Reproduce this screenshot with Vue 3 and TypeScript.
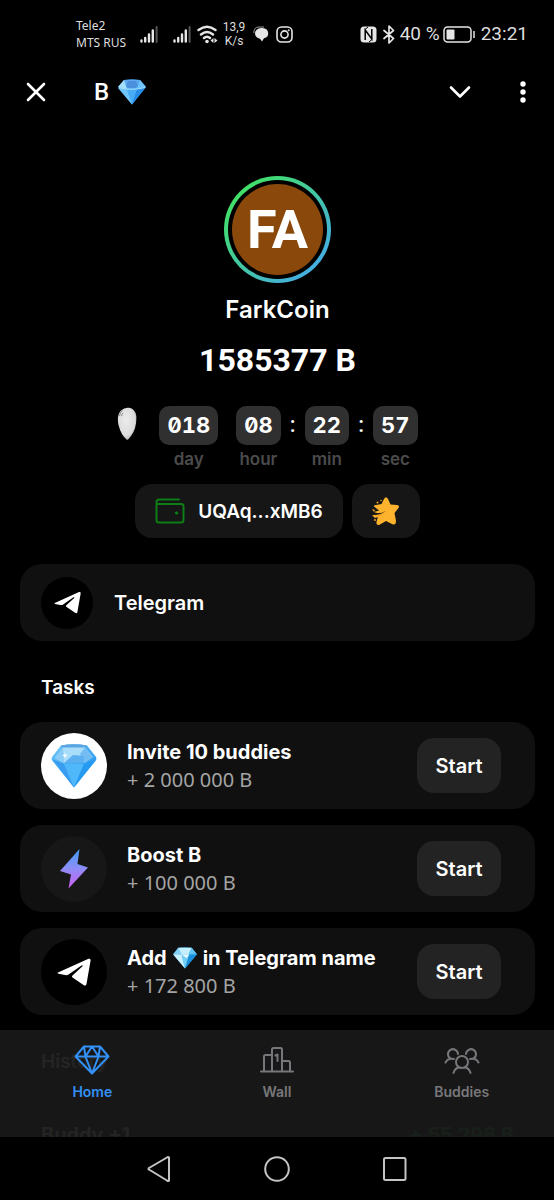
<script setup lang="ts">
import { ref } from 'vue'

interface TimeUnit { value: string; label: string; colon: boolean }
interface Task { id: string; icon: 'gem' | 'bolt' | 'telegram'; before: string; after: string; reward: string }
interface Tab { id: 'home' | 'wall' | 'buddies'; label: string }

const units: TimeUnit[] = [
  { value: '018', label: 'day', colon: false },
  { value: '08', label: 'hour', colon: false },
  { value: '22', label: 'min', colon: true },
  { value: '57', label: 'sec', colon: true },
]
const tasks: Task[] = [
  { id: 'invite', icon: 'gem', before: 'Invite 10 buddies', after: '', reward: '+ 2 000 000 B' },
  { id: 'boost', icon: 'bolt', before: 'Boost B', after: '', reward: '+ 100 000 B' },
  { id: 'name', icon: 'telegram', before: 'Add', after: 'in Telegram name', reward: '+ 172 800 B' },
]
const tabs: Tab[] = [
  { id: 'home', label: 'Home' },
  { id: 'wall', label: 'Wall' },
  { id: 'buddies', label: 'Buddies' },
]
const active = ref<Tab['id']>('home')
</script>

<template>
  <div class="screen">
    <svg class="defs" aria-hidden="true">
      <defs>
        <linearGradient id="gemBody" x1="0" y1="0" x2="1" y2="1">
          <stop offset="0" stop-color="#6fc8f8" /><stop offset="1" stop-color="#1689e8" />
        </linearGradient>
        <linearGradient id="boltFill" x1="0" y1="0" x2="0" y2="1">
          <stop offset="0" stop-color="#3f9cf5" /><stop offset=".5" stop-color="#8f8df8" /><stop offset="1" stop-color="#d05cf0" />
        </linearGradient>
        <radialGradient id="heartFill" cx=".45" cy=".4" r=".65">
          <stop offset="0" stop-color="#ececec" /><stop offset=".7" stop-color="#dcdcdc" /><stop offset="1" stop-color="#a9a9a9" />
        </radialGradient>
        <symbol id="gem" viewBox="0 0 46 44">
          <path d="M10 1.5Q23-1 36 1.5L45 13Q46 15 44.500 17L23 43.500 1.500 17Q0 15 1 13Z" fill="url(#gemBody)" />
          <path d="M10 1.500Q23-1 36 1.500L34 5H12Z" fill="#5aa5e2" />
          <path d="M12 3.500H34L42 13 33 19H13L4 14Z" fill="#a9defb" />
          <path d="M12 3.500 13 19 4 14Z" fill="#8accf7" />
          <path d="M34 3.500 42 13 33 19 29 10Z" fill="#74bdf4" />
          <path d="M13 19 22 11 33 12V19Z" fill="#5cb0f0" />
          <path d="M1 15 13 20 23 43.500Z" fill="#389df0" />
          <path d="M13 20H33L23 43.500Z" fill="#4fb8fa" />
          <path d="M33 20 45 15 23 43.500Z" fill="#259af3" />
          <path d="M14 8.500 14.700 10.800 17 11.500 14.700 12.200 14 14.500 13.300 12.200 11 11.500 13.300 10.800Z" fill="#fff" />
        </symbol>
        <symbol id="gemSmall" viewBox="0 0 28 26">
          <path d="M6 1Q14-.5 22 1L28 8.500 14 25.500 0 8.500Z" fill="#3db2ef" />
          <path d="M6 1 10 9H0Z" fill="#83d0f4" /><path d="M6 1H22L18 9H10Z" fill="#c4effd" />
          <path d="M22 1 28 8.500 18 9Z" fill="#62c3f2" /><path d="M0 9H10L14 25.500Z" fill="#c9f0fc" />
          <path d="M10 9 19 9 14 25.500Z" fill="#73cef5" /><path d="M19 9H28L14 25.500Z" fill="#198fdb" />
          <path d="M10 9 19 9 16 13Z" fill="#f0fcff" />
        </symbol>
        <symbol id="gemTitle" viewBox="0 0 28 26">
          <path d="M6 1Q14-.5 22 1L28 8 14 25.500 0 8Z" fill="#49aef8" />
          <path d="M6 1H22L20 7H8Z" fill="#5ea9ee" /><path d="M6 1 8 7 9 10 0 8Z" fill="#a4dcfc" />
          <path d="M10 2H18L20 7 17 9H10L8 7Z" fill="#4a90dc" /><path d="M22 1 28 8 19 10Z" fill="#6ec4fb" />
          <path d="M0 9H9L14 25.500Z" fill="#6fc6fb" /><path d="M9 11H19L14 25.500Z" fill="#48adf7" />
          <path d="M19 10 28 8 14 25.500Z" fill="#258ce8" />
          <path d="M1 8.500Q14 12 27 8.500" fill="none" stroke="#aee2fd" />
        </symbol>
        <symbol id="plane" viewBox="0 0 34 28">
          <path d="M1 14.500 31.500.800Q34 .200 33.500 3L29.500 26Q29 28.500 26.500 27L15.500 19.500Q14.500 18.500 15.500 17.500L25.500 8.200Q26 7 24.500 7.500L11.500 16.500Q10 17.500 8 17L1.500 15.800Q-.2 15.300 1 14.500Z" fill="#fff" />
        </symbol>
        <symbol id="signal" viewBox="0 0 18 17">
          <path d="M1.500 14.500V15.500M5.200 12V15.500M9 8.500V15.500M12.800 4.500V15.500" stroke="#e6e6e6" stroke-width="2.400" stroke-linecap="round" />
          <path d="M16.600 1V16" stroke="#555" stroke-width="2" stroke-linecap="round" />
        </symbol>
      </defs>
    </svg>

    <div class="status">
      <div class="carrier"><span>Tele2</span><span>MTS RUS</span></div>
      <svg class="sig" aria-hidden="true"><use href="#signal" /></svg>
      <svg class="sig second" aria-hidden="true"><use href="#signal" /></svg>
      <svg class="wifi" viewBox="0 0 21 19" fill="none" stroke="#e6e6e6" stroke-width="2.400" stroke-linecap="round" aria-hidden="true">
        <path d="M1.500 5Q10-1.500 18.500 5M4 9.500Q10 4.500 16 9.500M7 13Q10 10.500 13 13" />
        <circle cx="10" cy="16.500" r="1.800" fill="#e6e6e6" stroke="none" />
        <path d="M13.500 15.500 16.500 13V18ZM20.500 15.500 17.500 13V18Z" fill="#e6e6e6" stroke="none" />
      </svg>
      <div class="rate"><span>13,9</span><span>K/s</span></div>
      <svg class="chat" viewBox="0 0 16 16" aria-hidden="true">
        <path d="M.8 7Q.8 1 6 1H11" fill="none" stroke="#999" />
        <path d="M8 2H9.500A6.200 5.300 0 0 1 11 12.300L9 15.500 7 12.700A6.200 5.400 0 0 1 8 2Z" fill="#e6e6e6" />
      </svg>
      <svg class="insta" viewBox="0 0 17 17" fill="none" stroke="#e6e6e6" stroke-width="1.600" aria-hidden="true">
        <rect x="1" y="1" width="15" height="15" rx="4.500" /><circle cx="8.500" cy="8.500" r="3.600" /><circle cx="12.700" cy="4.300" r=".7" fill="#e6e6e6" stroke-width=".6" />
      </svg>
      <span class="grow"></span>
      <svg class="nfc" viewBox="0 0 17 17" aria-hidden="true">
        <rect x=".5" y=".5" width="16" height="16" rx="3.500" fill="#e6e6e6" />
        <path d="M5.200 14V4L11.800 13V3" fill="none" stroke="#000" stroke-width="1.500" /><path d="M5 3.500 8 1M12 13.500 9 16" stroke="#000" />
      </svg>
      <svg class="bt" viewBox="0 0 12 19" fill="none" stroke="#e6e6e6" stroke-width="1.700" stroke-linejoin="round" stroke-linecap="round" aria-hidden="true">
        <path d="M1 5.500 10.500 13.500 6 18V1L10.500 5.500 1 13.500" />
      </svg>
      <span class="big">40 %</span>
      <svg class="batt" viewBox="0 0 32 17" aria-hidden="true">
        <rect x="1" y="1" width="27" height="15" rx="3.500" fill="none" stroke="#e6e6e6" stroke-width="1.500" />
        <rect x="3.500" y="3.500" width="8" height="10" rx="1" fill="#e6e6e6" /><path d="M31 5V12" stroke="#e6e6e6" stroke-width="1.500" />
      </svg>
      <span class="big">23:21</span>
    </div>

    <header class="bar">
      <button class="plain" type="button" aria-label="Close">
        <svg width="20" height="20" viewBox="0 0 20 20" fill="none" stroke="#fff" stroke-width="2.600" stroke-linecap="round"><path d="M2 2 18 18M18 2 2 18" /></svg>
      </button>
      <h1 class="title">B <svg class="title-gem" aria-hidden="true"><use href="#gemTitle" /></svg></h1>
      <button class="plain" type="button" aria-label="Collapse">
        <svg width="22" height="14" viewBox="0 0 22 14" fill="none" stroke="#fff" stroke-width="2.600" stroke-linecap="round" stroke-linejoin="round"><path d="M2 2.500 11 11.500 20 2.500" /></svg>
      </button>
      <button class="plain menu" type="button" aria-label="Menu">
        <svg width="6" height="22" viewBox="0 0 6 22" fill="#fff"><circle cx="3" cy="3" r="2.700" /><circle cx="3" cy="11" r="2.700" /><circle cx="3" cy="19" r="2.700" /></svg>
      </button>
    </header>

    <div class="body">
      <main class="content">
        <section class="profile">
          <div class="ring"><div class="gap"><div class="disc">FA</div></div></div>
          <h2 class="name">FarkCoin</h2>
          <p class="total">1585377 B</p>

          <div class="timer">
            <svg class="heart" viewBox="0 0 20 34" aria-hidden="true">
              <path d="M10 33Q4 28 1.500 18Q-.5 8 4 3.500Q8 0 12 .8Q18 1.500 19.300 9Q20 21 14 29Q12 32 10 33Z" fill="url(#heartFill)" />
              <path d="M2.500 9Q3 5 5.500 3.500M4.500 9Q5 7 6 6" fill="none" stroke="#777" stroke-width=".8" />
            </svg>
            <template v-for="unit in units" :key="unit.label">
              <span v-if="unit.colon" class="colon">:</span>
              <div class="unit" :class="unit.label">
                <span class="digits">{{ unit.value }}</span>
                <span class="caption">{{ unit.label }}</span>
              </div>
            </template>
          </div>

          <div class="actions">
            <button class="chip wallet" type="button">
              <svg width="30" height="26" viewBox="0 0 30 26" fill="none" stroke="#0d7d16" stroke-width="2" stroke-linecap="round" stroke-linejoin="round" aria-hidden="true">
                <path d="M24 1.500H4Q1.500 1.500 1.500 4V22Q1.500 24.500 4 24.500H26Q28.500 24.500 28.500 22V8Q28.500 6 26 6H3" /><circle cx="21.500" cy="15" r="1.200" fill="#0d7d16" stroke-width="1" />
              </svg>
              <span>UQAq...xMB6</span>
            </button>
            <button class="chip star" type="button" aria-label="Stars">
              <svg width="28" height="30" viewBox="0 0 28 30" aria-hidden="true">
                <path d="M12 3Q14-.5 16 3L18.500 8.500 25 9Q28 9.500 26.500 12L22.500 17 24 25Q24 29 21 28.500L14 25 7 29Q4 29.500 4.500 26L6 20.500 9 18.500 2 16 7 14.500 2 10.500Q1.500 9 4 9L9.500 8Z" fill="#fdb32d" />
                <path d="M0 19.500 7 17.500 15 14.800 9.500 20 3 22ZM0 13 3 14 2 16Z" fill="#f9a825" />
                <path d="M2 17.500 9 17 14 15 8 18.200 3 19Z" fill="#171717" />
                <circle cx="3" cy="24" r="1" fill="#f7a422" /><circle cx="5.500" cy="6.500" r="1" fill="#f7a422" /><circle cx="9" cy="4.500" r=".8" fill="#f7a422" />
              </svg>
            </button>
          </div>
        </section>

        <a class="card link" href="#telegram">
          <span class="badge small"><svg class="plane small" aria-hidden="true"><use href="#plane" /></svg></span>
          <span>Telegram</span>
        </a>

        <section>
          <h3 class="heading">Tasks</h3>
          <ul class="tasks">
            <li v-for="task in tasks" :key="task.id" class="card task">
              <span class="badge" :class="task.icon">
                <svg v-if="task.icon === 'gem'" class="gem-icon" aria-hidden="true"><use href="#gem" /></svg>
                <svg v-else-if="task.icon === 'bolt'" class="bolt-icon" viewBox="0 0 30 42" aria-hidden="true"><path d="M20.500 1 18.500 16 29 19.500 9.500 40.500 12 26.500 1 23Z" fill="url(#boltFill)" /></svg>
                <svg v-else class="plane" aria-hidden="true"><use href="#plane" /></svg>
              </span>
              <div class="text">
                <h4><span>{{ task.before }}</span><template v-if="task.after"><svg class="inline-gem" aria-hidden="true"><use href="#gemSmall" /></svg><span>{{ task.after }}</span></template></h4>
                <p>{{ task.reward }}</p>
              </div>
              <button class="start" type="button">Start</button>
            </li>
          </ul>
        </section>

        <section>
          <h3 class="heading">History</h3>
          <div class="card entry"><span>Buddy +1</span><span class="gain">+ 55 296 B</span></div>
        </section>
      </main>

      <nav class="tabs">
        <button v-for="tab in tabs" :key="tab.id" class="tab" :class="{ active: active === tab.id }" type="button" @click="active = tab.id">
          <svg width="36" height="30" viewBox="0 0 36 30" fill="none" stroke="currentColor" stroke-width="2" stroke-linecap="round" stroke-linejoin="round" aria-hidden="true">
            <path v-if="tab.id === 'home'" d="M10 1.500H26L34.500 11.500 18 28.500 1.500 11.500ZM1.500 11.500H34.500M18 1.500 11.500 11.500 18 28.500 24.500 11.500ZM10 1.500 11.500 11.500M26 1.500 24.500 11.500" />
            <template v-else-if="tab.id === 'wall'">
              <path d="M2 26.500H34M5 26.500V11.500Q5 10 6.500 10H13M13 26.500V4.500Q13 3 14.500 3H21.500Q23 3 23 4.500V26.500M23 16H29.500Q31 16 31 17.500V26.500" />
              <path d="M16.500 10.500 18.500 9.500V16" />
            </template>
            <template v-else>
              <circle cx="18" cy="17" r="6" /><path d="M9.500 28Q11 23 15 22.500M26.500 28Q25 23 21 22.500M14 9A5 5 0 1 0 6.500 13.500M22 9A5 5 0 1 1 29.500 13.500M10 14Q4 12.500 1.500 17.500M26 14Q32 12.500 34.500 17.500" />
            </template>
          </svg>
          <span>{{ tab.label }}</span>
        </button>
      </nav>
    </div>

    <div class="system">
      <button class="plain" type="button" aria-label="Back">
        <svg width="26" height="28" viewBox="0 0 26 28" fill="none" stroke="#c4c4c4" stroke-width="2" stroke-linejoin="round"><path d="M23 2.500V25.500Q22 26.500 21 25.500L3 14.500Q2 14 3 13L21 2.500Q22 1.500 23 2.500Z" /></svg>
      </button>
      <button class="plain" type="button" aria-label="Home screen">
        <svg width="26" height="26" viewBox="0 0 26 26" fill="none" stroke="#c4c4c4" stroke-width="2"><circle cx="13" cy="13" r="11.800" /></svg>
      </button>
      <button class="plain" type="button" aria-label="Recent apps">
        <svg width="26" height="26" viewBox="0 0 26 26" fill="none" stroke="#c4c4c4" stroke-width="2"><rect x="2" y="2" width="21.500" height="22" rx="1.500" /></svg>
      </button>
    </div>
  </div>
</template>

<style>
body { margin: 0; background: #000; }
</style>

<style scoped>
.screen { display: flex; flex-direction: column; height: 100vh; overflow: hidden; background: #000; color: #fff; font-family: Inter, "Noto Sans", sans-serif; }
.screen * { box-sizing: border-box; }
h1, h2, h3, h4, p, ul { margin: 0; padding: 0; }
button { border: 0; padding: 0; color: inherit; font: inherit; background: none; cursor: pointer; }
svg { display: block; flex: none; }
.defs { position: absolute; width: 0; height: 0; }

.status { display: flex; flex: none; align-items: center; height: 68px; padding: 0 26px 0 76px; color: #dedede; font-family: Roboto, sans-serif; }
.carrier { display: flex; flex-direction: column; width: 64px; font: 12px/17px "Noto Sans", sans-serif; white-space: nowrap; }
.sig { width: 18px; height: 17px; }
.second { margin-left: 15px; }
.wifi { width: 21px; height: 19px; margin-left: 6px; }
.rate { display: flex; flex-direction: column; align-items: center; width: 26px; margin-left: 3px; font-size: 12px; line-height: 14px; }
.chat { width: 16px; height: 16px; margin-left: 6px; }
.insta { width: 17px; height: 17px; margin-left: 7px; }
.grow { flex: 1; }
.nfc { width: 17px; height: 17px; }
.bt { width: 12px; height: 19px; margin: 0 5px 0 6px; }
.big { font-size: 19px; line-height: 24px; white-space: nowrap; }
.batt { width: 32px; height: 17px; margin: 0 6px 0 3px; }

.bar { display: flex; flex: none; align-items: center; height: 48px; padding: 0 28px 0 26px; }
.plain { display: flex; align-items: center; justify-content: center; }
.title { display: flex; flex: 1; align-items: center; gap: 9px; margin-left: 48px; font: 500 24px/32px Roboto, sans-serif; }
.title-gem { width: 28px; height: 26px; }
.menu { margin-left: 49px; }

.body { position: relative; flex: 1; min-height: 0; overflow: hidden; }
.content { display: flex; flex-direction: column; padding: 60px 19px 0 20px; }
.profile { display: flex; flex-direction: column; align-items: center; }
.ring { padding: 4px; border-radius: 50%; background: linear-gradient(135deg, #42df68 15%, #45aee0 85%); }
.gap { padding: 4px; border-radius: 50%; background: #000; }
.disc { display: grid; place-items: center; width: 91px; height: 91px; border-radius: 50%; background: #8a480a; font: 700 54px/56px Roboto, sans-serif; }
.name { margin-top: 12px; font-size: 24px; font-weight: 600; line-height: 30px; }
.total { margin-top: 16px; font: 700 32px/38px Roboto, sans-serif; }
.timer { display: flex; align-items: flex-start; margin: 27px 20px 0 0; }
.heart { width: 20px; height: 34px; margin: 1px 22px 0 0; }
.unit { display: flex; flex-direction: column; align-items: center; }
.day { margin-right: 18px; }
.digits { padding: 0 8px; border-radius: 10px; background: #303030; font-size: 22px; font-weight: 700; line-height: 39px; font-variant-numeric: tabular-nums slashed-zero; }
.caption { margin-top: 4px; color: #4b4b4b; font-size: 17px; font-weight: 600; line-height: 20px; }
.colon { width: 24px; font: 500 22px/38px Roboto, sans-serif; text-align: center; }
.actions { display: flex; gap: 9px; margin-top: 15px; }
.chip { display: flex; align-items: center; justify-content: center; height: 54px; border-radius: 17px; background: #161616; font-size: 19px; font-weight: 600; }
.wallet { gap: 13px; width: 208px; }
.star { width: 68px; }

.card { display: flex; align-items: center; padding: 0 21px; border-radius: 22px; background: #101010; }
.link { height: 77px; margin-top: 26px; gap: 21px; color: #fff; font-size: 20px; font-weight: 600; text-decoration: none; }
.badge { display: grid; flex: none; place-items: center; width: 66px; height: 66px; border-radius: 50%; background: #000; }
.badge.small { width: 52px; height: 52px; }
.badge.gem { background: #fff; }
.badge.bolt { background: #171717; }
.gem-icon { width: 46px; height: 44px; }
.bolt-icon { width: 30px; height: 42px; }
.plane { width: 34px; height: 28px; }
.plane.small { width: 27px; height: 23px; }
.heading { margin: 34px 0 22px 21px; font-size: 19px; font-weight: 600; line-height: 25px; }
.tasks { display: flex; flex-direction: column; gap: 16px; list-style: none; }
.task { height: 87px; padding-right: 34px; gap: 20px; }
.text { flex: 1; min-width: 0; }
.text h4 { display: flex; align-items: center; gap: 6px; font-size: 20px; font-weight: 700; line-height: 28px; white-space: nowrap; }
.text p { color: #a4a4a4; font: 20px/28px "Noto Sans", sans-serif; }
.inline-gem { width: 24px; height: 22px; }
.start { width: 84px; height: 55px; border-radius: 17px; background: #232323; font-size: 20px; font-weight: 600; }
.entry { justify-content: space-between; height: 77px; font-size: 20px; font-weight: 600; }
.gain { color: #22a83c; }

.tabs { position: absolute; right: 0; bottom: 0; left: 0; display: flex; height: 107px; background: rgba(24, 24, 24, .95); }
.tab { display: flex; flex: 1; flex-direction: column; align-items: center; gap: 7px; padding-top: 15px; color: #77777b; font-size: 14px; font-weight: 600; line-height: 20px; }
.tab.active { color: #3390f5; }
.system { display: flex; flex: none; align-items: center; justify-content: center; gap: 92px; height: 63px; }
</style>
